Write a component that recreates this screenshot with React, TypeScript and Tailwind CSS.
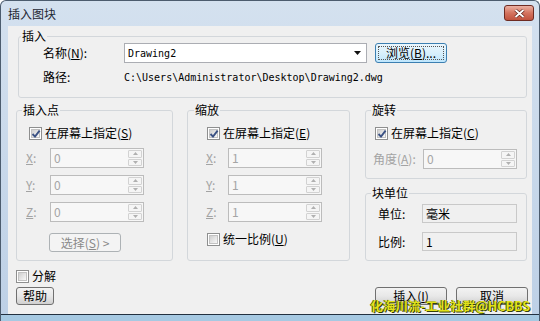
import type { ReactNode } from 'react';

function Check({ on }: { on?: boolean }) {
  return (
    <span className="relative flex h-[13px] w-[13px] shrink-0 items-center justify-center border border-[#8e8f8f] bg-white">
      <span className="h-[9px] w-[9px] border border-[#c2c2c2] bg-linear-to-br from-[#cfcfcf] to-[#f8f8f8]" />
      {on && (
        <svg className="absolute left-[1px] top-[1px]" width="10" height="10" viewBox="0 0 10 10">
          <path d="M1.5 5 L4 7.6 L8.6 1.6" fill="none" stroke="#3b5284" strokeWidth="1.9" />
        </svg>
      )}
    </span>
  );
}

function Spin() {
  return (
    <span className="flex h-full w-[16px] flex-col gap-px p-px">
      <span className="flex flex-1 items-center justify-center rounded-[1px] border border-[#d2d2d2] bg-[#f5f5f5]">
        <svg width="5" height="3" viewBox="0 0 5 3">
          <path d="M0 3 L2.5 0 L5 3Z" fill="#b0b0b0" />
        </svg>
      </span>
      <span className="flex flex-1 items-center justify-center rounded-[1px] border border-[#d2d2d2] bg-[#f5f5f5]">
        <svg width="5" height="3" viewBox="0 0 5 3">
          <path d="M0 0 L2.5 3 L5 0Z" fill="#b0b0b0" />
        </svg>
      </span>
    </span>
  );
}

function NumField({ v }: { v: string }) {
  return (
    <div className="flex h-[20px] w-[94px] items-center justify-between border border-[#bcbcbc] bg-[#f7f7f7]">
      <span className="pl-[3px] text-[#a5a5a5]">{v}</span>
      <Spin />
    </div>
  );
}

function AxisRow({ axis, v, label, className }: { axis: string; v: string; label: string; className: string }) {
  return (
    <div className={className}>
      <span className={label + ' text-[#a3a3a3]'}>
        <u>{axis}</u>:
      </span>
      <NumField v={v} />
    </div>
  );
}

function Btn({ children, className }: { children: ReactNode; className: string }) {
  return (
    <button
      className={
        'flex h-[18px] items-center justify-center rounded-[3px] border border-[#707070] bg-linear-to-b from-[#f3f3f3] via-[#e8e8e8] to-[#d0d0d0] leading-[14px] text-black ' +
        className
      }
    >
      {children}
    </button>
  );
}

function Group({ title, legend, className, children }: { title: string; legend: string; className: string; children: ReactNode }) {
  return (
    <fieldset className={'rounded-[3px] border border-[#d3d7db] p-0 ' + className}>
      <legend className={'px-[1px] leading-[14px] ' + legend}>{title}</legend>
      {children}
    </fieldset>
  );
}

export default function App() {
  return (
    <div className="flex h-[321px] w-[540px] flex-col overflow-hidden rounded-t-[6px] border-x border-t border-[#4c5c6e] bg-linear-to-b from-[#d4e1ef] to-[#bdd0e6] font-['Noto_Sans_CJK_SC',sans-serif] text-[12px] text-black">
      {/* Title bar */}
      <div className="flex h-[25px] shrink-0 items-start justify-between pl-[7px] pr-[5px]">
        <span className="mt-[5px] leading-[16px] text-[#1e2733]">插入图块</span>
        <span className="mt-[4px] flex h-[16px] w-[30px] items-center justify-center rounded-[3px] border border-[#6e2b22] bg-linear-to-b from-[#eab0a2] via-[#d4735f] to-[#c0523e]">
          <svg width="11" height="9" viewBox="0 0 11 9">
            <path d="M1.5 1 L9.5 8 M9.5 1 L1.5 8" stroke="#5a2018" strokeWidth="3.2" />
            <path d="M1.5 1 L9.5 8 M9.5 1 L1.5 8" stroke="#ffffff" strokeWidth="1.8" />
          </svg>
        </span>
      </div>

      {/* Client area */}
      <div className="relative mx-[7px] flex h-[288px] shrink-0 flex-col bg-[#f0f0f0]">
        <Group title="插入" legend="ml-[2px]" className="ml-[10px] mr-[5px] mt-[3px]">
          <div className="flex pb-[13px] pl-[24px]">
            <div className="flex flex-col">
              <div className="flex h-[20px] items-center">
                <span className="w-[81px]">
                  名称(<u>N</u>):
                </span>
                <div className="flex h-[20px] w-[243px] items-center justify-between border border-[#abadb3] bg-white pl-[3px] pr-[5px]">
                  <span className="font-['DejaVu_Sans_Mono',monospace] text-[10px]">Drawing2</span>
                  <svg width="7" height="4" viewBox="0 0 7 4">
                    <path d="M0 0 L7 0 L3.5 4Z" fill="#111" />
                  </svg>
                </div>
                <button className="ml-[8px] flex h-[20px] w-[72px] items-center justify-center rounded-[3px] border border-[#3c7fb1] bg-linear-to-b from-[#eaf6fd] via-[#d9f0fc] to-[#bee6fd] p-[2px]">
                  <span className="flex h-full w-full items-center justify-center border border-dotted border-[#555] leading-[14px]">
                    浏览(<u>B</u>)...
                  </span>
                </button>
              </div>
              <div className="mt-[7px] flex h-[14px] items-center">
                <span className="w-[81px]">路径:</span>
                <span className="font-['DejaVu_Sans_Mono',monospace] text-[10px]">
                  C:\Users\Administrator\Desktop\Drawing2.dwg
                </span>
              </div>
            </div>
          </div>
        </Group>

        <div className="ml-[8px] mt-[5px] flex">
          <Group title="插入点" legend="ml-[5px]" className="w-[157px]">
            <div className="flex flex-col pb-[8px] pl-[9px]">
              <div className="mt-[9px] flex h-[14px] items-center gap-[3px] pl-[3px]">
                <Check on />
                <span>
                  在屏幕上指定(<u>S</u>)
                </span>
              </div>
              <AxisRow axis="X" v="0" label="w-[24px]" className="mt-[8px] flex items-center" />
              <AxisRow axis="Y" v="0" label="w-[24px]" className="mt-[7px] flex items-center" />
              <AxisRow axis="Z" v="0" label="w-[24px]" className="mt-[7px] flex items-center" />
              <button className="ml-[23px] mt-[11px] flex h-[19px] w-[72px] items-center justify-center rounded-[3px] border border-[#adb2b5] bg-[#f4f4f4] leading-[14px] text-[#8a8a8a]">
                选择(<u>S</u>) &gt;
              </button>
            </div>
          </Group>

          <Group title="缩放" legend="ml-[6px]" className="ml-[14px] w-[163px]">
            <div className="flex flex-col pb-[14px] pl-[18px]">
              <div className="mt-[9px] flex h-[14px] items-center gap-[3px] pl-[1px]">
                <Check on />
                <span>
                  在屏幕上指定(<u>E</u>)
                </span>
              </div>
              <AxisRow axis="X" v="1" label="w-[22px]" className="mt-[8px] flex items-center" />
              <AxisRow axis="Y" v="1" label="w-[22px]" className="mt-[7px] flex items-center" />
              <AxisRow axis="Z" v="1" label="w-[22px]" className="mt-[7px] flex items-center" />
              <div className="mt-[10px] flex h-[14px] items-center gap-[3px] pl-[1px]">
                <Check />
                <span>
                  统一比例(<u>U</u>)
                </span>
              </div>
            </div>
          </Group>

          <div className="ml-[15px] flex w-[162px] flex-col">
            <Group title="旋转" legend="ml-[5px]" className="w-full">
              <div className="flex flex-col pb-[9px] pl-[7px]">
                <div className="mt-[9px] flex h-[14px] items-center gap-[3px] pl-[2px]">
                  <Check on />
                  <span>
                    在屏幕上指定(<u>C</u>)
                  </span>
                </div>
                <div className="mt-[9px] flex items-center">
                  <span className="w-[50px] text-[#a3a3a3]">
                    角度(<u>A</u>):
                  </span>
                  <NumField v="0" />
                </div>
              </div>
            </Group>
            <Group title="块单位" legend="ml-[5px]" className="mt-[7px] w-full">
              <div className="flex flex-col pb-[9px] pl-[12px]">
                <div className="mt-[4px] flex items-center">
                  <span className="w-[44px]">单位:</span>
                  <span className="flex h-[19px] w-[95px] items-center border border-[#c9c9c9] pl-[3px]">毫米</span>
                </div>
                <div className="mt-[9px] flex items-center">
                  <span className="w-[44px]">比例:</span>
                  <span className="flex h-[19px] w-[95px] items-center border border-[#c9c9c9] pl-[3px]">1</span>
                </div>
              </div>
            </Group>
          </div>
        </div>

        <div className="ml-[8px] mt-[8px] flex h-[14px] items-center gap-[3px]">
          <Check />
          <span>分解</span>
        </div>

        <div className="mt-[4px] flex pl-[8px] pr-[4px]">
          <Btn className="w-[38px]">帮助</Btn>
          <div className="flex-1" />
          <Btn className="w-[72px]">
            插入(<u>I</u>)
          </Btn>
          <Btn className="ml-[9px] w-[72px]">取消</Btn>
        </div>

        {/* watermark stamped over the buttons */}
        <span className="absolute bottom-[1px] right-[2px] text-[12.5px] font-bold leading-[15px] text-[#e2e21a] [text-shadow:1px_1px_0_#34400a,-1px_0_0_#55600f]">
          化海川流-工业社群@HCBBS
        </span>
      </div>

      <div className="h-[1px] shrink-0 bg-[#233140]" />
      <div className="flex-1 bg-[#a6c9e2]" />
    </div>
  );
}
